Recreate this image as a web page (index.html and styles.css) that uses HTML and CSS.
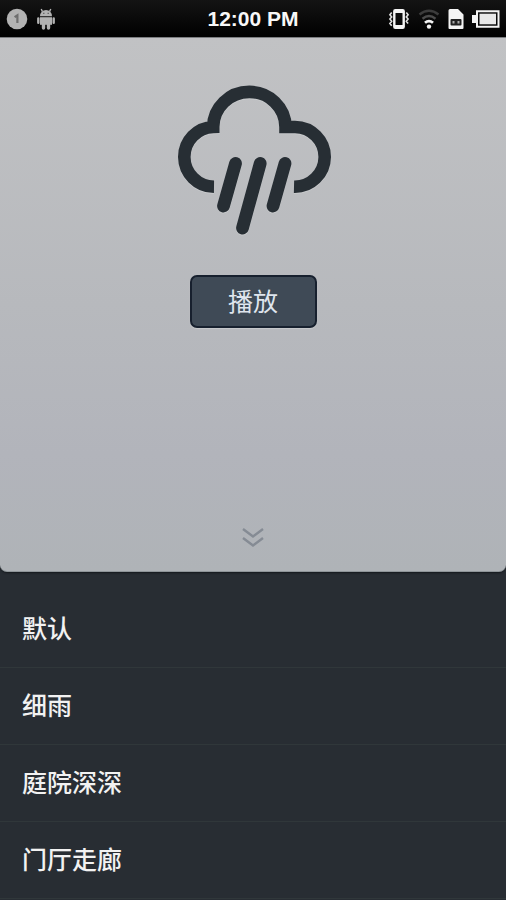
FILE: index.html
```html
<!DOCTYPE html>
<html lang="zh-CN">
<head>
<meta charset="utf-8">
<meta name="viewport" content="width=device-width, initial-scale=1">
<title>雨声</title>
<link rel="stylesheet" href="styles.css">
</head>
<body>
<header class="status">
  <div class="status-side">
    <svg width="22" height="22" viewBox="0 0 22 22" aria-hidden="true">
      <circle cx="11" cy="11" r="10.3" fill="#b2b2b2"/>
      <path d="M8.6 9.2l2.8-1.9v7.6" fill="none" stroke="#6e6e6e" stroke-width="2.2"/>
    </svg>
    <svg width="20" height="22" viewBox="0 0 18 22" aria-hidden="true">
      <path d="M3 8.2a6 6.200 0 0 1 12 0z" fill="#b2b2b2"/>
      <path d="M5.5 3.6L4.2 1M12.5 3.6L13.8 1" stroke="#b2b2b2" stroke-width="1.4"/>
      <path d="M3 9.2h12v7.6H3z" fill="#b2b2b2"/>
      <path d="M1.3 10.5v4.2M16.7 10.5v4.2" stroke="#b2b2b2" stroke-width="2.4" stroke-linecap="round"/>
      <path d="M6.5 16v4M11.5 16v4" stroke="#b2b2b2" stroke-width="3.400" stroke-linecap="round"/>
      <path d="M6.2 5.4h1.2M10.6 5.4h1.2" stroke="#555" stroke-width="1.2"/>
    </svg>
  </div>
  <time class="clock">12:00 PM</time>
  <div class="status-side status-right">
    <svg width="22" height="22" viewBox="0 0 22 22" aria-hidden="true">
      <rect x="6.3" y="2.3" width="9.4" height="17.4" rx="1" fill="none" stroke="#f4f4f4" stroke-width="2.4"/>
      <path d="M6 4h10M6 18h10" stroke="#f4f4f4" stroke-width="2"/>
      <path d="M3.7 4.5l-1.8 2.2 1.8 2.2-1.8 2.2 1.8 2.2-1.8 2.2 1.8 2.2M18.3 4.5l1.8 2.2-1.8 2.2 1.8 2.2-1.8 2.2 1.8 2.2" fill="none" stroke="#e0e0e0" stroke-width="1.6"/>
    </svg>
    <svg width="22" height="22" viewBox="0 0 22 22" fill="none" stroke-width="2.4" aria-hidden="true">
      <path d="M1.5 6.5q9.5-7.5 19 0" stroke="#3c3c3c"/>
      <path d="M4.5 10.7q6.5-5.2 13 0" stroke="#4c4c4c"/>
      <path d="M7 14.800q4-3.400 8 0" stroke="#f4f4f4" stroke-width="2.800"/>
      <circle cx="11" cy="18.6" r="2.2" fill="#f4f4f4"/>
    </svg>
    <svg width="16" height="22" viewBox="0 0 16 22" aria-hidden="true">
      <path d="M2 1h8l5.5 5.5V20a1 1 0 0 1-1 1H1.5a1 1 0 0 1-1-1V2.5A1.5 1.5 0 0 1 2 1z" fill="#f4f4f4"/>
      <rect x="2.5" y="11" width="11" height="6.5" rx="1" fill="#222"/>
      <path d="M4.5 13h2v2.5h-2zM9.5 13h2v2.5h-2z" fill="#aaa"/>
    </svg>
    <svg width="28" height="22" viewBox="0 0 28 22" aria-hidden="true">
      <path d="M5 3.2h21.5v15.6H5z" fill="none" stroke="#f4f4f4" stroke-width="2"/>
      <path d="M0 7h5v8H0z" fill="#f4f4f4"/>
      <rect x="7.5" y="5.7" width="16.5" height="10.6" fill="#e8e8e8"/>
    </svg>
  </div>
</header>
<main class="screen">
  <section class="player">
    <svg class="weather" viewBox="176 85 154 151" role="img" aria-label="雨" fill="none" stroke="#272e34" stroke-width="12.6">
      <path d="M214 186.800A30 30 0 0 1 184.300 157A30 30 0 0 1 213.200 127A36 35 0 0 1 285.500 127L295 127A30 30 0 0 1 324.700 157A30 30 0 0 1 294 186.800"/>
      <path d="M235.5 163.5L223.5 206M260.2 163.5L242.5 228M285 163.5L273 206" stroke-linecap="round" stroke-width="12.8"/>
    </svg>
    <button class="play" type="button">播放</button>
    <button class="expand" type="button" aria-label="收起">
      <svg width="22" height="20" viewBox="0 0 22 20" fill="none" stroke="#858b94" stroke-width="2.4" aria-hidden="true">
        <path d="M1 2l10 7.5L21 2M1 11l10 7.5L21 11"/>
      </svg>
    </button>
  </section>
  <ul class="sounds">
    <li><a href="#default">默认</a></li>
    <li><a href="#drizzle">细雨</a></li>
    <li><a href="#courtyard">庭院深深</a></li>
    <li><a href="#hallway">门厅走廊</a></li>
  </ul>
</main>
</body>
</html>
```
FILE: styles.css
```css
* {
  box-sizing: border-box;
}

body {
  margin: 0;
  min-height: 100vh;
  background: #282d33;
  font-family: "Liberation Sans", "Noto Sans CJK SC", sans-serif;
}

.status {
  display: grid;
  grid-template-columns: 1fr auto 1fr;
  align-items: center;
  height: 37px;
  padding: 0 6px;
  background: linear-gradient(#141414, #000);
  color: #f8f8f8;
}

.status-side {
  display: flex;
  align-items: center;
  gap: 8px;
}

.status-right {
  justify-content: flex-end;
}

.clock {
  font-size: 21px;
  line-height: 24px;
  font-weight: bold;
}

.player {
  display: flex;
  flex-direction: column;
  align-items: center;
  padding: 47px 0 21px;
  border-top: 1px solid #7b7d80;
  border-bottom: 1px solid #8f9599;
  border-radius: 0 0 7px 7px;
  background: linear-gradient(#c1c2c4, #b7b9bd 50%, #b2b4bb 78%, #afb3b7);
  box-shadow: 0 1px 2px #15191d;
}

.weather {
  width: 154px;
  height: 151px;
  overflow: visible;
  filter: drop-shadow(0 1px 0 #c8cacc);
}

.play {
  width: 127px;
  height: 53px;
  margin-top: 39px;
  padding: 0 0 3px;
  border: 2px solid #17202e;
  border-radius: 7px;
  background: #3f4a56;
  box-shadow: 0 1px 1px #c8cacc;
  color: #dfe5ed;
  font: 25px/46px "Noto Sans CJK SC", sans-serif;
}

.expand {
  display: flex;
  margin-top: 196px;
  padding: 3px;
  border: 0;
  background: none;
}

.sounds {
  margin: 0;
  padding: 19px 0 0;
  list-style: none;
}

.sounds li {
  border-bottom: 1px solid #30373a;
}

.sounds a {
  display: block;
  padding: 0 22px 4px;
  color: #f2f2f2;
  font: 500 25px/72px "Noto Sans CJK SC", sans-serif;
  text-decoration: none;
}
```
